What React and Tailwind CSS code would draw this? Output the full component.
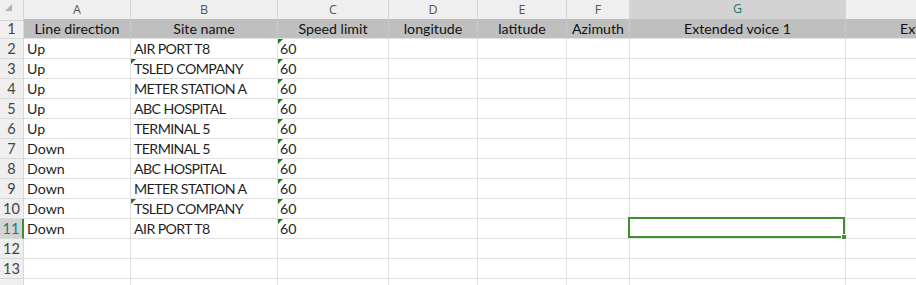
import React from "react";

const COLS = ["A", "B", "C", "D", "E", "F", "G", ""];
const HEADERS = ["Line direction", "Site name", "Speed limit", "longitude", "latitude", "Azimuth", "Extended voice 1", "Extended voice 2"];

const ROWS = [
  ["Up", "AIR PORT T8"],
  ["Up", "TSLED COMPANY"],
  ["Up", "METER STATION A"],
  ["Up", "ABC HOSPITAL"],
  ["Up", "TERMINAL 5"],
  ["Down", "TERMINAL 5"],
  ["Down", "ABC HOSPITAL"],
  ["Down", "METER STATION A"],
  ["Down", "TSLED COMPANY"],
  ["Down", "AIR PORT T8"],
];

const GRID = "grid w-[1100px] grid-cols-[24px_107px_147px_111px_89px_89px_63px_216px_216px_1fr]";

function Flag() {
  return (
    <span className="absolute left-0 top-0 h-0 w-0 border-r-[5px] border-t-[5px] border-r-transparent border-t-[#1e7b22]" />
  );
}

function RowHead({ n, active }) {
  return (
    <div
      className={
        "flex h-5 items-center justify-center border-b border-r border-[#d9d9d9] text-[14.5px] " +
        (active ? "border-r-2 border-r-[#3f8f2a] bg-[#d3d3d3] text-[#217a6b]" : "bg-[#efefef] text-[#444]")
      }
    >
      {n}
    </div>
  );
}

function Cell({ children, flag, center, className = "" }) {
  return (
    <div
      className={
        "relative h-5 overflow-hidden whitespace-nowrap border-b border-r border-[#e1e1e1] px-[3px] leading-[20px] text-[#1f1f1f] " +
        (center ? "text-center " : "") +
        className
      }
    >
      {flag ? <Flag /> : null}
      {children}
    </div>
  );
}

export default function App() {
  return (
    <div className="h-[285px] w-[916px] overflow-hidden bg-white font-['Lato',sans-serif] text-[14.2px]">
      <div className={GRID + " h-[19px] font-['Open_Sans',sans-serif] text-[12.5px]"}>
        <div className="relative border-b border-r border-[#d4d4d4] bg-[#efefef]">
          <span className="absolute left-[5px] top-[4px] h-0 w-0 border-b-[7px] border-l-[7px] border-b-[#b4b4b4] border-l-transparent" />
        </div>
        {COLS.map((c, i) => (
          <div
            key={i}
            className={
              "flex items-center justify-center border-b border-r border-[#d4d4d4] " +
              (c === "G" ? "border-b-2 border-b-[#3f8f2a] bg-[#d3d3d3] text-[#217a6b]" : "bg-[#efefef] text-[#555]")
            }
          >
            {c}
          </div>
        ))}
        <div className="border-b border-[#d4d4d4] bg-[#efefef]" />
      </div>

      <div className={GRID}>
        <RowHead n={1} />
        {HEADERS.map((h) => (
          <Cell key={h} center className="border-r-[#c8c8c8] bg-[#bfbfbf] text-[#111]">
            {h}
          </Cell>
        ))}
        <Cell className="bg-[#bfbfbf]" />
      </div>

      {ROWS.map((r, i) => {
        const n = i + 2;
        return (
          <div key={n} className={GRID}>
            <RowHead n={n} active={n === 11} />
            <Cell>{r[0]}</Cell>
            <Cell flag={r[1] === "TSLED COMPANY"} className="tracking-[-0.6px]">
              {r[1]}
            </Cell>
            <Cell flag className="pl-[2px]">60</Cell>
            <Cell />
            <Cell />
            <Cell />
            <Cell className="overflow-visible">
              {n === 11 ? (
                <span className="absolute -left-[2px] -top-[2px] z-10 h-[21px] w-[217px] border-2 border-[#3f8f2a]">
                  <span className="absolute -bottom-[4px] -right-[4px] h-[6px] w-[6px] border border-white bg-[#3f8f2a]" />
                </span>
              ) : null}
            </Cell>
            <Cell />
            <Cell />
          </div>
        );
      })}

      {[12, 13, 0].map((n) => (
        <div key={n} className={GRID}>
          <RowHead n={n || ""} />
          {[...COLS, "I"].map((c, i) => (
            <Cell key={i} />
          ))}
        </div>
      ))}
    </div>
  );
}
